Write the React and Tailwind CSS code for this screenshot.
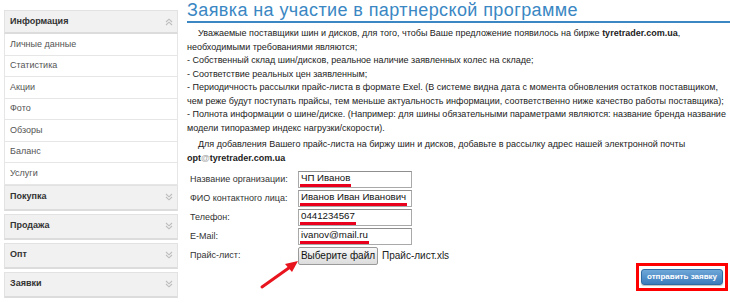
import React from "react"

const infoItems = ["Личные данные", "Статистика", "Акции", "Фото", "Обзоры", "Баланс", "Услуги"]
const groups = ["Покупка", "Продажа", "Опт", "Заявки"]

const fields = [
  { label: "Название организации:", value: "ЧП Иванов" },
  { label: "ФИО контактного лица:", value: "Иванов Иван Иванович" },
  { label: "Телефон:", value: "0441234567" },
  { label: "E-Mail:", value: "ivanov@mail.ru" },
]

function Chevrons({ up }) {
  return (
    <svg width="8" height="8" viewBox="0 0 8 8" className="mr-[4px]">
      {up ? (
        <g fill="none" stroke="#bdbdbd" strokeWidth="1.1">
          <path d="M1 4 L4 1.2 L7 4" />
          <path d="M1 7 L4 4.2 L7 7" />
        </g>
      ) : (
        <g fill="none" stroke="#bdbdbd" strokeWidth="1.1">
          <path d="M1 1 L4 3.8 L7 1" />
          <path d="M1 4 L4 6.8 L7 4" />
        </g>
      )}
    </svg>
  )
}

function GroupHeader({ title }) {
  return (
    <div className="h-[26px] bg-[#f1f1f1] border border-[#e2e2e2] border-b-2 border-b-[#dcdcdc] flex items-center justify-between pl-[5px] text-[9px] font-bold text-[#333]">
      <span>{title}</span>
      <Chevrons />
    </div>
  )
}

export default function App() {
  return (
    <div className="w-[730px] h-[303px] overflow-hidden bg-white flex relative font-['Liberation_Sans',Arial,sans-serif] text-[#333]">

      {/* Sidebar */}
      <aside className="w-[174px] ml-[4px] mt-[10px] shrink-0">
        <div className="h-[24px] bg-[#f1f1f1] border border-[#e2e2e2] border-b-2 border-b-[#dcdcdc] flex items-center justify-between pl-[5px] text-[9px] font-bold text-[#333]">
          <span>Информация</span>
          <Chevrons up />
        </div>
        {infoItems.map((item) => (
          <div key={item} className="h-[21.5px] border-x border-b border-[#e6e6e6] flex items-center pl-[5px] text-[9px] text-[#555]">
            {item}
          </div>
        ))}
        {groups.map((g) => (
          <div key={g} className="mb-[3px]">
            <GroupHeader title={g} />
          </div>
        ))}
      </aside>

      {/* Main */}
      <main className="ml-[9px] flex-1 flex flex-col">
        <h1 className="h-[23px] border-b-2 border-[#3a87c3] text-[18px] tracking-[0.4px] leading-[20px] text-[#3a87c3] whitespace-nowrap">
          Заявка на участие в партнерской программе
        </h1>

        <div className="mt-[4px] text-[9px] leading-[13.5px] text-[#222] whitespace-nowrap">
          <p>
            <span className="block pl-[11px]">
              Уважаемые поставщики шин и дисков, для того, чтобы Ваше предложение появилось на бирже <b>tyretrader.com.ua</b>,
            </span>
            <span className="block">необходимыми требованиями являются;</span>
            <span className="block">- Собственный склад шин/дисков, реальное наличие заявленных колес на складе;</span>
            <span className="block">- Соответствие реальных цен заявленным;</span>
            <span className="block">- Периодичность рассылки прайс-листа в формате Exel. (В системе видна дата с момента обновления остатков поставщиком,</span>
            <span className="block">чем реже будут поступать прайсы, тем меньше актуальность информации, соответственно ниже качество работы поставщика);</span>
            <span className="block">- Полнота информации о шине/диске. (Например: для шины обязательными параметрами являются: название бренда название</span>
            <span className="block">модели типоразмер индекс нагрузки/скорости).</span>
          </p>
          <p className="mt-[3px]">
            <span className="block pl-[11px]">
              Для добавления Вашего прайс-листа на биржу шин и дисков, добавьте в рассылку адрес нашей электронной почты
            </span>
            <b className="block">opt<span className="text-[#aaa]">@</span>tyretrader.com.ua</b>
          </p>
        </div>

        {/* Form */}
        <div className="mt-[5px] pl-[3px] flex flex-col">
          {fields.map(({ label, value }) => (
            <div key={label} className="flex items-center h-[19px]">
              <span className="w-[108px] text-[9px] text-[#333] whitespace-nowrap">{label}</span>
              <div className="w-[114px] h-[17px] border border-[#a9a9a9] border-t-[#8f8f8f] bg-white flex items-end pl-[1px] overflow-hidden">
                <span className="text-[9.7px] leading-[12px] text-[#111] px-[1px] border-b-[3px] border-[#e8001c] whitespace-nowrap">
                  {value}
                </span>
              </div>
            </div>
          ))}
          <div className="flex items-center h-[19px]">
            <span className="w-[108px] text-[9px] text-[#333]">Прайс-лист:</span>
            <button className="h-[18px] w-[80px] border border-[#9a9a9a] rounded-[2px] bg-gradient-to-b from-[#f8f8f8] to-[#dcdcdc] text-[10px] text-[#111] whitespace-nowrap">
              Выберите файл
            </button>
            <span className="ml-[4px] text-[10px] text-[#222]">Прайс-лист.xls</span>
          </div>
        </div>

        <div className="flex justify-end mr-[2px] mt-[-2px]">
          <div className="flex border-[3px] border-[#ff0000] px-[2px] py-[3px]">
            <button className="w-[82px] h-[16px] rounded-[3px] border border-[#2f6aa3] bg-gradient-to-b from-[#6ea7d8] to-[#3c7cbc] text-white text-[8px] font-bold leading-none whitespace-nowrap shadow-[0_1px_1px_rgba(0,0,0,0.25)]">
              отправить заявку
            </button>
          </div>
        </div>
      </main>

      {/* annotation arrow */}
      <svg className="absolute left-[255px] top-[255px]" width="50" height="40" viewBox="0 0 50 40">
        <line x1="7" y1="32" x2="38" y2="10" stroke="#e8141e" strokeWidth="3" strokeLinecap="round" />
        <path d="M43 6 L30 9 L37 17 Z" fill="#e8141e" />
      </svg>
    </div>
  )
}
